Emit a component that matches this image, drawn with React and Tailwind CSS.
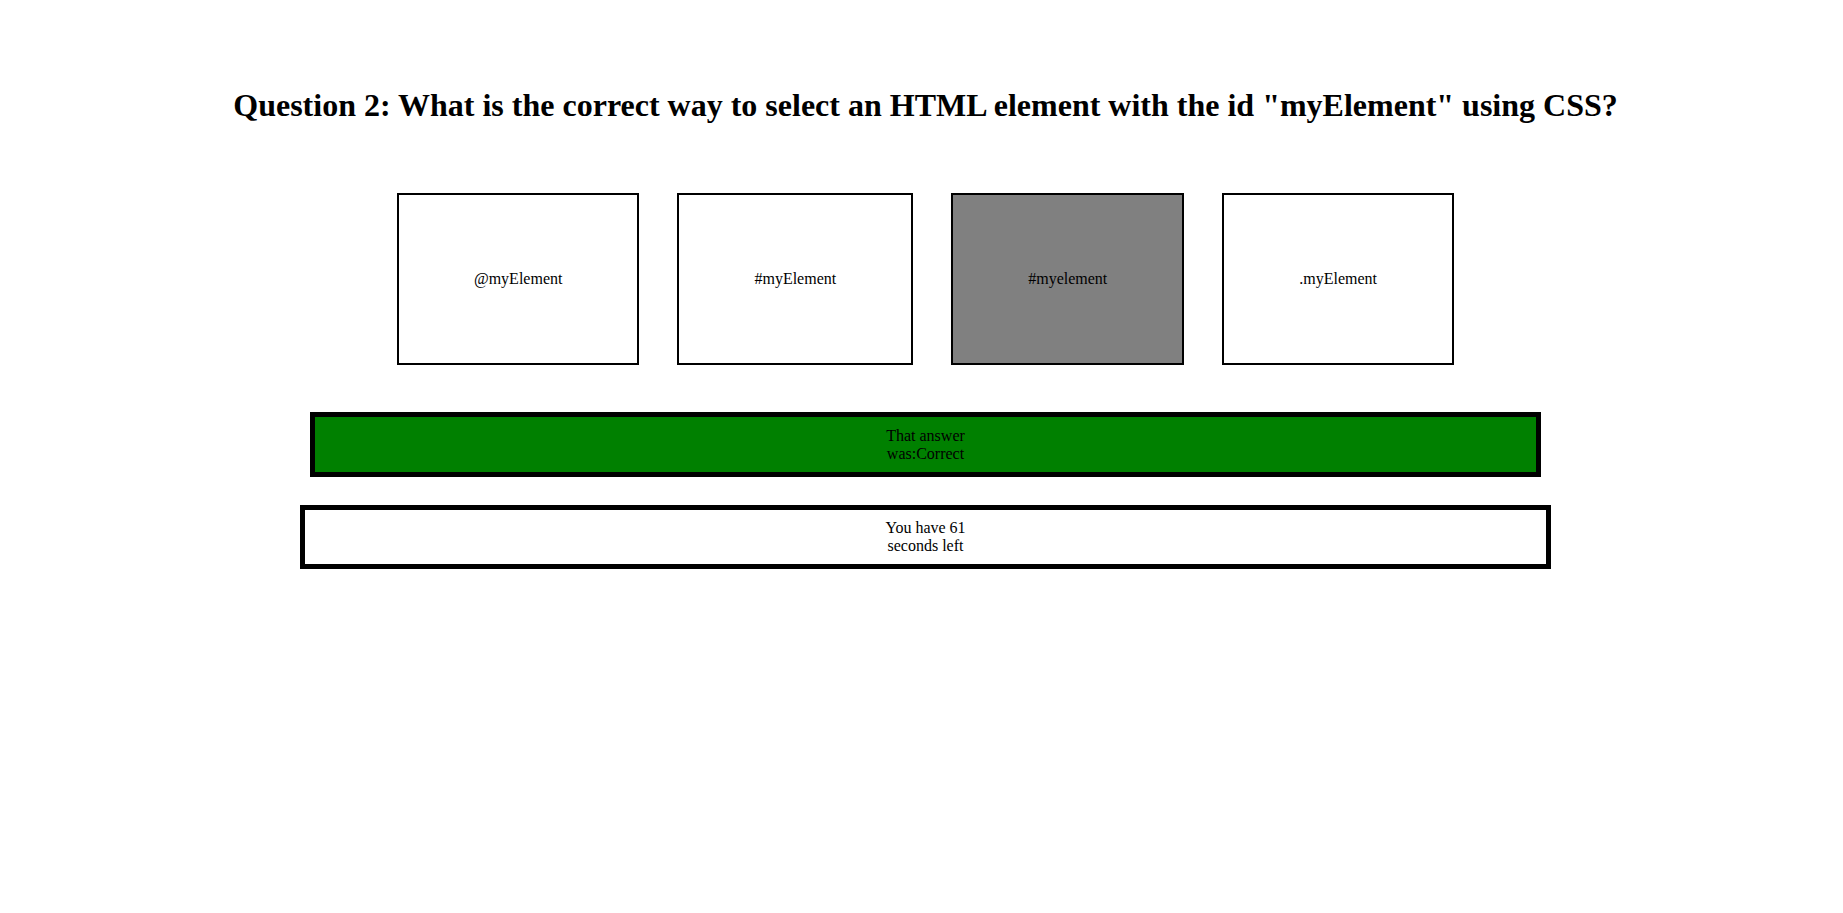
import { useState, useEffect } from 'react';

const answers = [
  { id: 1, text: '@myElement' },
  { id: 2, text: '#myElement' },
  { id: 3, text: '#myelement' },
  { id: 4, text: '.myElement' },
];

/** Одна карточка ответа */
function AnswerCard({ text, selected, onPick }) {
  return (
    <button
      onClick={onPick}
      className={`h-[172px] px-[75px] border-2 border-black flex items-center justify-center text-[16px] text-black ${
        selected ? 'bg-[#808080]' : 'bg-white'
      }`}
    >
      {text}
    </button>
  );
}

export default function App() {
  const [picked, setPicked] = useState(3);
  const [secondsLeft] = useState(61);

  useEffect(() => {
    document.title = 'Quiz';
  }, []);

  return (
    <div
      className="min-h-screen bg-white text-black pl-2 pt-[87px]"
      style={{ fontFamily: '"Liberation Serif", "Times New Roman", serif' }}
    >
      <h1 className="text-center text-[32px] font-bold leading-[37px]">
        Question 2: What is the correct way to select an HTML element with the id "myElement" using CSS?
      </h1>

      {/* Варианты ответа */}
      <div className="mt-[69px] flex justify-center gap-[38px]">
        {answers.map((a) => (
          <AnswerCard
            key={a.id}
            text={a.text}
            selected={picked === a.id}
            onPick={() => setPicked(a.id)}
          />
        ))}
      </div>

      {/* Результат */}
      <div className="mt-[47px] mx-auto w-[1231px] h-[65px] border-[5px] border-black bg-[#008000] flex items-center justify-center">
        <p className="w-[90px] text-center text-[16px] leading-[18px]">That answer was:Correct</p>
      </div>

      {/* Таймер */}
      <div className="mt-[28px] mx-auto w-[1251px] h-[64px] border-[5px] border-black bg-white flex items-center justify-center">
        <p className="w-[90px] text-center text-[16px] leading-[18px]">You have {secondsLeft} seconds left</p>
      </div>
    </div>
  );
}
